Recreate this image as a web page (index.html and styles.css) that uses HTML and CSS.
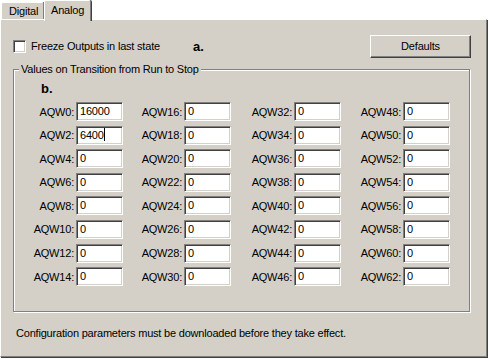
FILE: index.html
```html
<!DOCTYPE html>
<html>
<head>
<meta charset="utf-8">
<link rel="stylesheet" href="styles.css">
</head>
<body>
<div class="tabs">
  <div class="tab">Digital</div>
  <div class="tab active">Analog</div>
</div>
<div class="panel">
  <div class="toprow">
    <label class="check"><span class="box"></span><span>Freeze Outputs in last state</span></label>
    <span class="mark mark-a">a.</span>
    <button class="btn">Defaults</button>
  </div>
  <div class="group">
    <span class="legend">Values on Transition from Run to Stop</span>
    <div class="mark mark-b">b.</div>
    <div class="grid">
      <div class="cell"><span class="lbl">AQW0:</span><span class="field">16000</span></div>
      <div class="cell"><span class="lbl">AQW16:</span><span class="field">0</span></div>
      <div class="cell"><span class="lbl">AQW32:</span><span class="field">0</span></div>
      <div class="cell"><span class="lbl">AQW48:</span><span class="field">0</span></div>
      <div class="cell"><span class="lbl">AQW2:</span><span class="field">6400<span class="caret"></span></span></div>
      <div class="cell"><span class="lbl">AQW18:</span><span class="field">0</span></div>
      <div class="cell"><span class="lbl">AQW34:</span><span class="field">0</span></div>
      <div class="cell"><span class="lbl">AQW50:</span><span class="field">0</span></div>
      <div class="cell"><span class="lbl">AQW4:</span><span class="field">0</span></div>
      <div class="cell"><span class="lbl">AQW20:</span><span class="field">0</span></div>
      <div class="cell"><span class="lbl">AQW36:</span><span class="field">0</span></div>
      <div class="cell"><span class="lbl">AQW52:</span><span class="field">0</span></div>
      <div class="cell"><span class="lbl">AQW6:</span><span class="field">0</span></div>
      <div class="cell"><span class="lbl">AQW22:</span><span class="field">0</span></div>
      <div class="cell"><span class="lbl">AQW38:</span><span class="field">0</span></div>
      <div class="cell"><span class="lbl">AQW54:</span><span class="field">0</span></div>
      <div class="cell"><span class="lbl">AQW8:</span><span class="field">0</span></div>
      <div class="cell"><span class="lbl">AQW24:</span><span class="field">0</span></div>
      <div class="cell"><span class="lbl">AQW40:</span><span class="field">0</span></div>
      <div class="cell"><span class="lbl">AQW56:</span><span class="field">0</span></div>
      <div class="cell"><span class="lbl">AQW10:</span><span class="field">0</span></div>
      <div class="cell"><span class="lbl">AQW26:</span><span class="field">0</span></div>
      <div class="cell"><span class="lbl">AQW42:</span><span class="field">0</span></div>
      <div class="cell"><span class="lbl">AQW58:</span><span class="field">0</span></div>
      <div class="cell"><span class="lbl">AQW12:</span><span class="field">0</span></div>
      <div class="cell"><span class="lbl">AQW28:</span><span class="field">0</span></div>
      <div class="cell"><span class="lbl">AQW44:</span><span class="field">0</span></div>
      <div class="cell"><span class="lbl">AQW60:</span><span class="field">0</span></div>
      <div class="cell"><span class="lbl">AQW14:</span><span class="field">0</span></div>
      <div class="cell"><span class="lbl">AQW30:</span><span class="field">0</span></div>
      <div class="cell"><span class="lbl">AQW46:</span><span class="field">0</span></div>
      <div class="cell"><span class="lbl">AQW62:</span><span class="field">0</span></div>
    </div>
  </div>
  <div class="footer">Configuration parameters must be downloaded before they take effect.</div>
</div>
</body>
</html>
```

FILE: styles.css
```css
* { box-sizing: border-box; }
html, body { margin: 0; padding: 0; background: #fff; }
body {
  width: 488px;
  height: 359px;
  font-family: "Liberation Sans", Arial, sans-serif;
  font-size: 11px;
  letter-spacing: -0.2px;
  color: #000;
  overflow: hidden;
}
.tabs {
  display: flex;
  align-items: flex-end;
  height: 19px;
  position: relative;
  z-index: 2;
}
.tab {
  height: 17px;
  width: 43px;
  margin-left: 1px;
  padding: 2px 0 0 7px;
  background: #d4d0c8;
  border-top: 1px solid #fff;
  border-left: 1px solid #fff;
  border-right: 1px solid #808080;
  box-shadow: 1px 0 0 #404040;
  border-radius: 2px 2px 0 0;
}
.tab.active {
  height: 21px;
  width: 47px;
  margin-left: 0;
  margin-bottom: -2px;
  padding: 3px 0 0 6px;
}
.panel {
  width: 487px;
  height: 338px;
  background: #d4d0c8;
  border-top: 1px solid #fff;
  border-left: 1px solid #fff;
  border-right: 1px solid #808080;
  border-bottom: 1px solid #808080;
  box-shadow: 1px 1px 0 #404040;
  padding: 15px 0 0 12px;
  display: flex;
  flex-direction: column;
}
.toprow {
  display: flex;
  align-items: center;
  height: 22px;
}
.check {
  display: flex;
  align-items: center;
  gap: 5px;
}
.box {
  width: 13px;
  height: 13px;
  background: #fff;
  border-top: 1px solid #808080;
  border-left: 1px solid #808080;
  border-right: 1px solid #fff;
  border-bottom: 1px solid #fff;
  box-shadow: inset 1px 1px 0 #404040, inset -1px -1px 0 #d4d0c8;
}
.mark {
  font-weight: bold;
  font-size: 13px;
  letter-spacing: 0;
}
.mark-a { margin-left: 33px; }
.btn {
  margin-left: auto;
  margin-right: 15px;
  width: 101px;
  height: 23px;
  font: inherit;
  letter-spacing: -0.2px;
  background: #d4d0c8;
  border-top: 1px solid #fff;
  border-left: 1px solid #fff;
  border-right: 1px solid #404040;
  border-bottom: 1px solid #404040;
  box-shadow: inset -1px -1px 0 #808080;
  padding: 0;
  color: #000;
}
.group {
  position: relative;
  margin-top: 12px;
  width: 457px;
  height: 243px;
  border: 1px solid #808080;
  box-shadow: inset 1px 1px 0 #fff, 1px 1px 0 #fff;
  padding: 12px 0 0 1px;
}
.legend {
  position: absolute;
  top: -8px;
  left: 5px;
  padding: 0 2px;
  background: #d4d0c8;
  line-height: 14px;
}
.mark-b {
  margin-left: 26px;
  height: 20px;
  line-height: 14px;
}
.grid {
  display: grid;
  grid-template-columns: 108px 110px 109px 109px;
  grid-auto-rows: 19px;
  row-gap: 4.6px;
}
.cell {
  display: flex;
  align-items: center;
}
.lbl {
  width: 61px;
  text-align: right;
  padding-right: 2px;
}
.field {
  position: relative;
  width: 47px;
  height: 19px;
  background: #fff;
  border-top: 1px solid #808080;
  border-left: 1px solid #808080;
  border-right: 1px solid #fff;
  border-bottom: 1px solid #fff;
  box-shadow: inset 1px 1px 0 #404040, inset -1px -1px 0 #d4d0c8;
  padding: 1px 0 0 3px;
  line-height: 15px;
}
.caret {
  display: inline-block;
  width: 1px;
  height: 13px;
  background: #000;
  vertical-align: -2px;
}
.footer {
  margin-top: 15px;
  padding-left: 3px;
}
```
